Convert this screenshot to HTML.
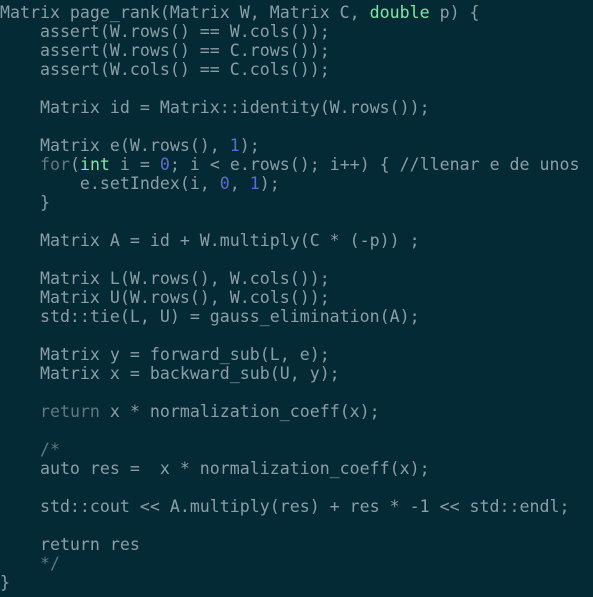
<!DOCTYPE html>
<html><head><meta charset="utf-8"><style>
html,body{margin:0;padding:0;background:#042a35;width:593px;height:597px;overflow:hidden}
pre{margin:0;padding:3px 0 0 0;font-family:"DejaVu Sans Mono","Liberation Mono",monospace;font-size:16.6px;line-height:19px;color:#8a9ea7;white-space:pre}
.k{color:#5f7883}.n{color:#5e6ccb}.t{color:#80e6a6}
</style></head><body><pre>Matrix page_rank(Matrix W, Matrix C, <span class="t">double</span> p) {
    assert(W.rows() == W.cols());
    assert(W.rows() == C.rows());
    assert(W.cols() == C.cols());

    Matrix id = Matrix::identity(W.rows());

    Matrix e(W.rows(), <span class="n">1</span>);
    <span class="k">for</span>(<span class="t">int</span> i = <span class="n">0</span>; i &lt; e.rows(); i++) { //llenar e de unos
        e.setIndex(i, <span class="n">0</span>, <span class="n">1</span>);
    }

    Matrix A = id + W.multiply(C * (-p)) ;

    Matrix L(W.rows(), W.cols());
    Matrix U(W.rows(), W.cols());
    std::tie(L, U) = gauss_elimination(A);

    Matrix y = forward_sub(L, e);
    Matrix x = backward_sub(U, y);

    <span class="k">return</span> x * normalization_coeff(x);

    <span class="k">/*</span>
    auto res =  x * normalization_coeff(x);

    std::cout &lt;&lt; A.multiply(res) + res * -1 &lt;&lt; std::endl;

    return res
    <span class="k">*/</span>
}</pre></body></html>
